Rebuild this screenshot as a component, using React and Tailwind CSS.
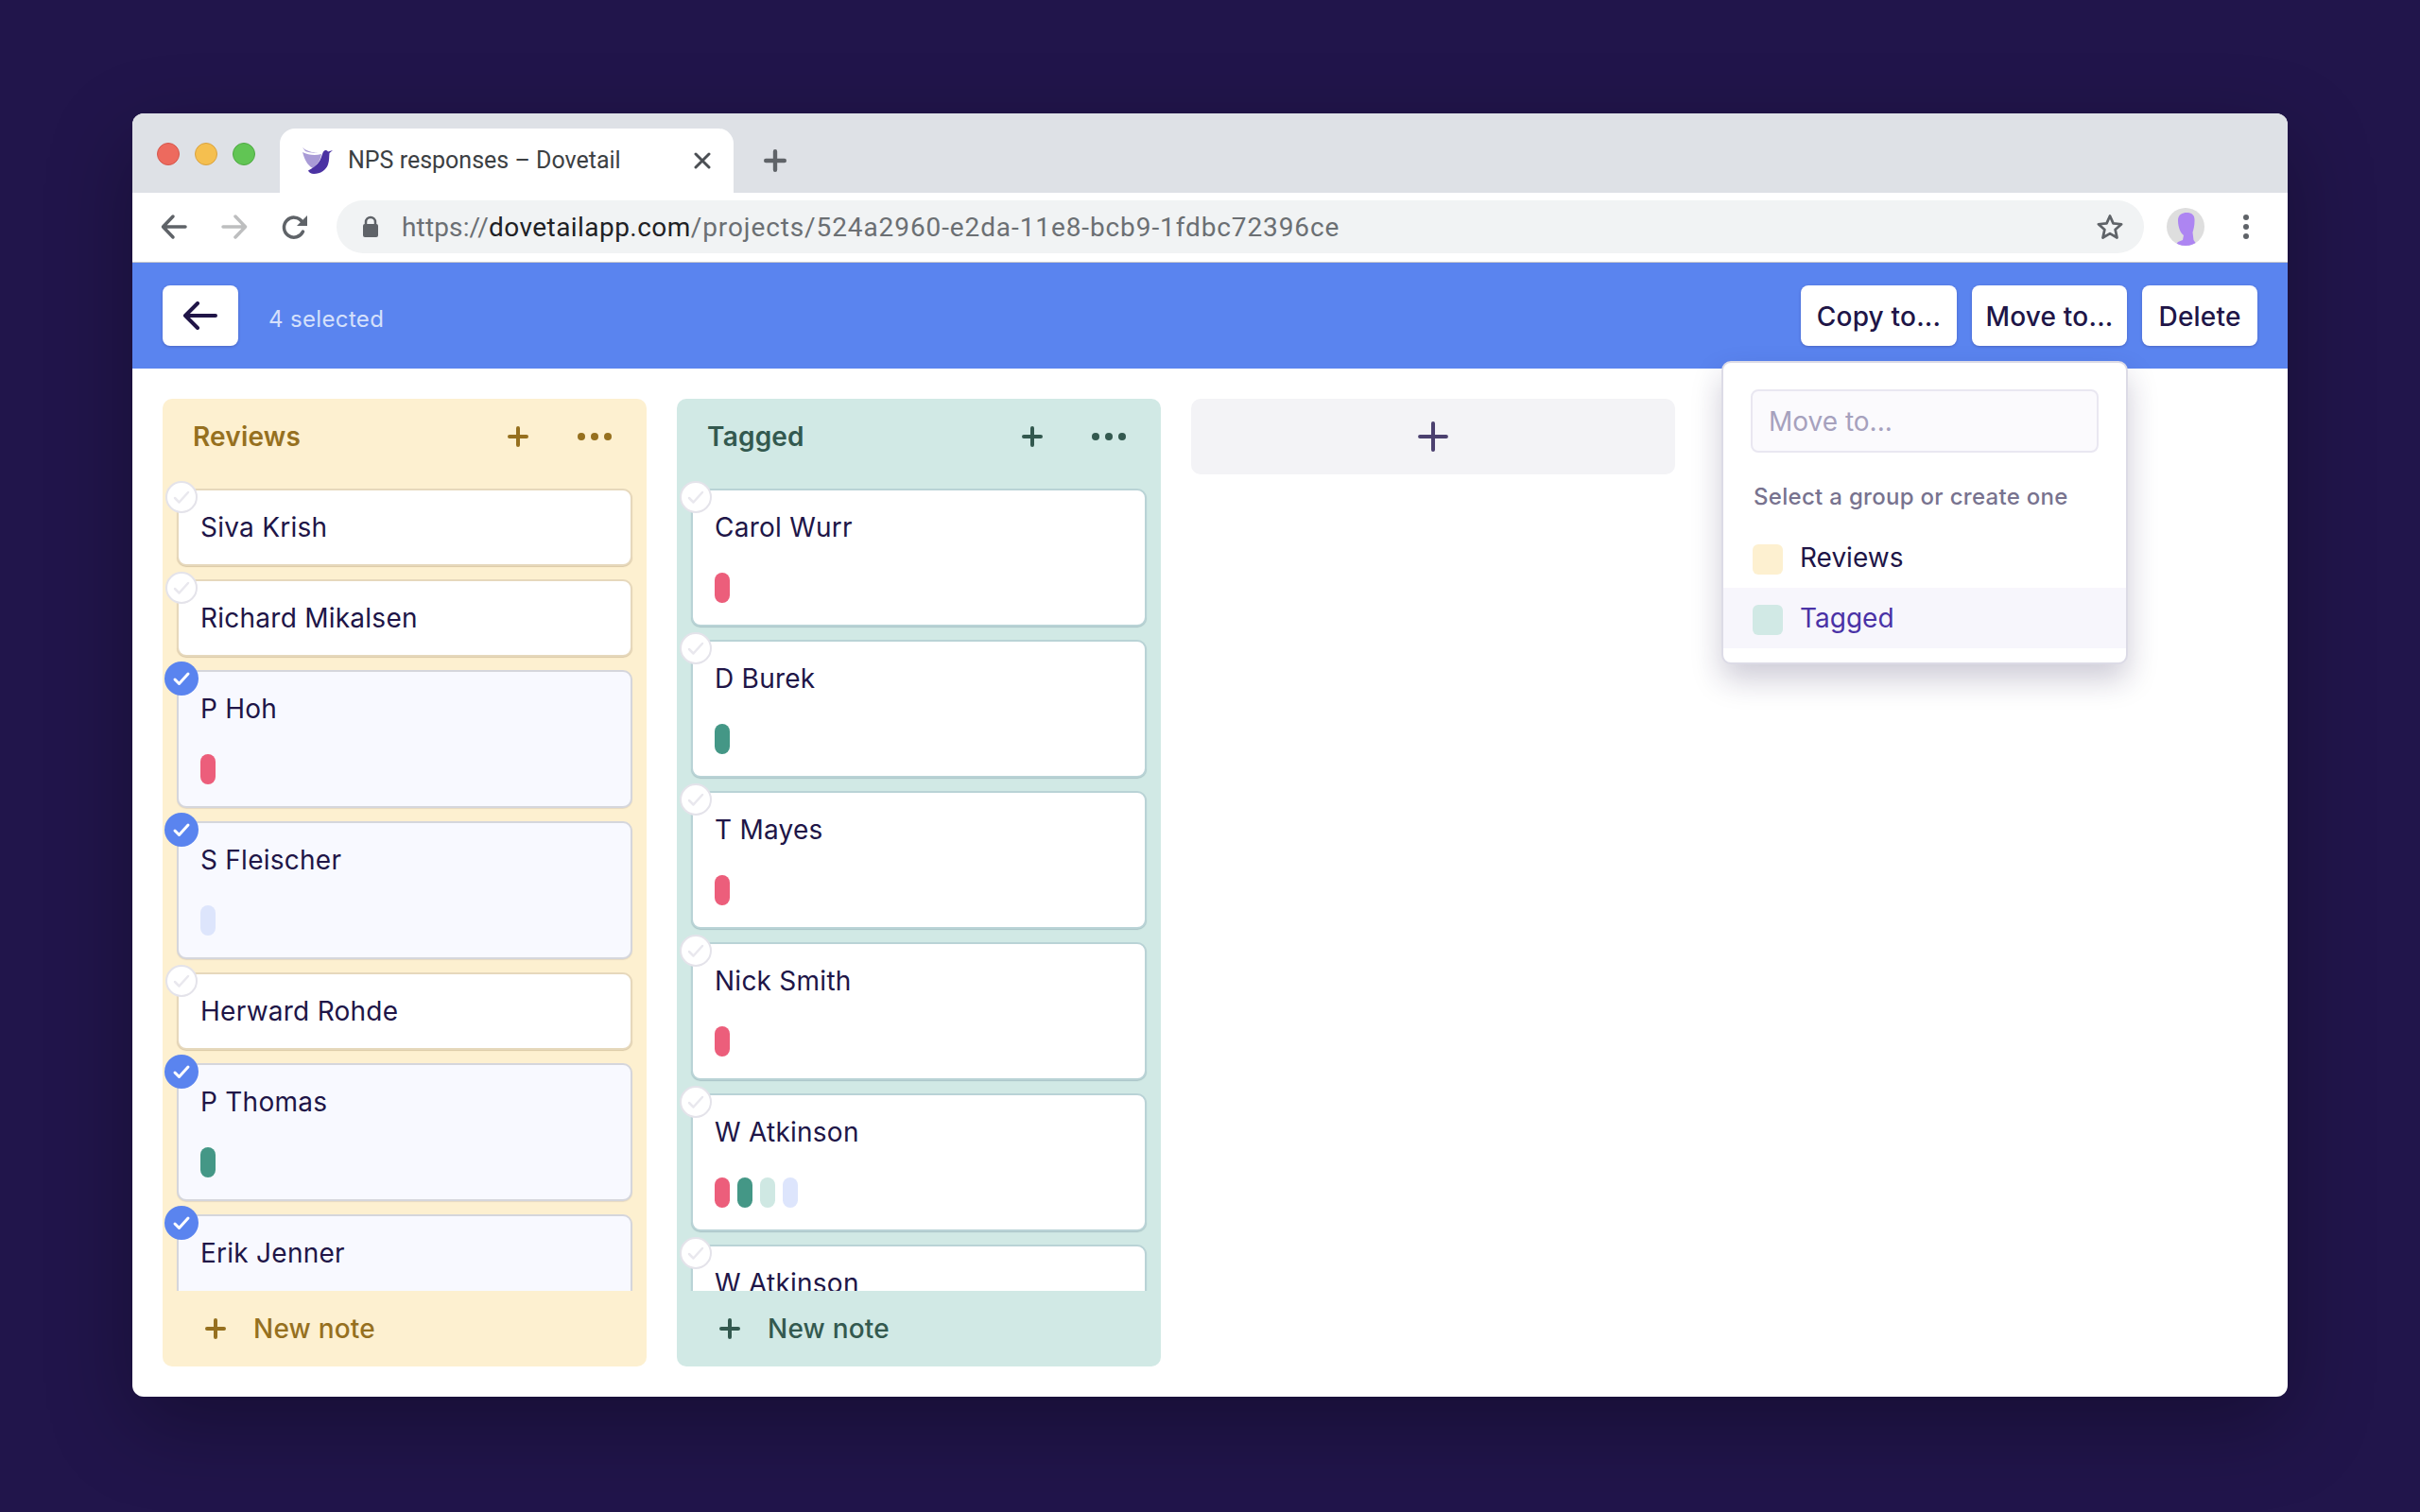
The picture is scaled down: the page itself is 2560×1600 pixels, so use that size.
import React from "react";

const Plus = ({ size = 22, w = 4, color = "currentColor" }) => (
  <svg width={size} height={size} viewBox="0 0 22 22" fill="none" stroke={color} strokeWidth={w} strokeLinecap="round">
    <path d="M11 2v18M2 11h18" />
  </svg>
);

const Dots = () => (
  <svg width="36" height="10" viewBox="0 0 36 10" fill="currentColor">
    <circle cx="4" cy="5" r="4" />
    <circle cx="18" cy="5" r="4" />
    <circle cx="32" cy="5" r="4" />
  </svg>
);

const Check = ({ color, w = 3 }) => (
  <svg width="20" height="16" viewBox="0 0 20 16" fill="none" stroke={color} strokeWidth={w} strokeLinecap="round" strokeLinejoin="round">
    <path d="M3 9l4.5 4.5L17 3" />
  </svg>
);

const Pill = ({ c }) => {
  const cls = {
    red: "w-4 h-8 rounded-full bg-[#ec5e7b]",
    green: "w-4 h-8 rounded-full bg-[#449786]",
    teal: "w-4 h-8 rounded-full bg-[#cfe8e3]",
    blue: "w-4 h-8 rounded-full bg-[#dde5fc]",
  }[c];
  return <span className={cls} />;
};

function Card({ name, pills = [], selected, tint }) {
  const border =
    tint === "yellow"
      ? selected
        ? "border-[#d5d6dc] shadow-[0_1px_1px_rgba(32,21,71,0.1)]"
        : "border-[#e6d8bc] shadow-[0_1px_1px_rgba(90,60,20,0.22)]"
      : "border-[#b9d3d6] shadow-[0_1px_1px_rgba(32,70,90,0.22)]";
  return (
    <div className={`relative shrink-0 w-[482px] rounded-[10px] border-2 pl-[23px] pr-4 pt-[19px] ${selected ? "bg-[#f8f9ff]" : "bg-white"} ${border} ${pills.length ? "h-[146px]" : "h-[82px]"}`}>
      <div className="text-[28px] leading-[40px] text-[#201547] tracking-[0.25px]">{name}</div>
      {pills.length > 0 && (
        <div className="flex gap-2 mt-[28px]">
          {pills.map((p, i) => (
            <Pill key={i} c={p} />
          ))}
        </div>
      )}
      {selected ? (
        <div className="absolute -left-[15px] -top-[11px] w-9 h-9 rounded-full bg-[#5a84ef] flex items-center justify-center">
          <Check color="#ffffff" w={3} />
        </div>
      ) : (
        <div className="absolute -left-[14px] -top-[10px] w-[34px] h-[34px] rounded-full bg-white border-2 border-[#e4e3ea] flex items-center justify-center">
          <Check color="#e9e8ee" w={2.5} />
        </div>
      )}
    </div>
  );
}

function Column({ title, bg, fg, cards, tint }) {
  return (
    <div className={`w-[512px] h-[1024px] rounded-[10px] flex flex-col ${bg}`}>
      <div className={`h-[80px] shrink-0 flex items-center pl-8 pr-[37px] ${fg}`}>
        <div className="flex-1 text-[28px] font-semibold tracking-[0.2px]">{title}</div>
        <div className="mr-[52px]"><Plus /></div>
        <Dots />
      </div>
      <div className="flex-1 overflow-hidden flex flex-col gap-[14px] pl-[15px] pr-[15px] pt-[15px] min-h-0">
        {cards.map((c, i) => (
          <Card key={i} {...c} tint={tint} />
        ))}
      </div>
      <div className={`h-[80px] shrink-0 flex items-center pl-[45px] ${fg}`}>
        <Plus />
        <span className="ml-[29px] text-[28px] font-medium tracking-[0.2px]">New note</span>
      </div>
    </div>
  );
}

const Bird = () => (
  <svg width="34" height="30" viewBox="0 0 34 30">
    <path d="M1 1c4 4 11 6 17 5-3 1-9 1-14-1L1 1z" fill="#a99bd6" />
    <path d="M1 6c6 3 13 4 20 2-1 7-5 12-9 15C6 20 3 13 1 6z" fill="#a99bd6" />
    <path d="M33 4l-5 1.5c-1-1.5-3-2-4.500-.5-1 1-1.500 3-2.500 6-1.500 5-5 10-14 14.500 1 2 3 3.500 6 3.500 7 0 13-4 15-10 1.500-4.500 1-8 1.500-12L33 4z" fill="#4b32a3" />
  </svg>
);

const Avatar = () => (
  <svg width="40" height="40" viewBox="0 0 40 40">
    <defs>
      <clipPath id="av"><circle cx="20" cy="20" r="20" /></clipPath>
    </defs>
    <circle cx="20" cy="20" r="20" fill="#dedede" />
    <path clipPath="url(#av)" d="M12 13c0-6 5-8 9-8 6 0 9 3 8.500 9 0 5-1 8-2 12l1 8 4 6H9l3-4 5-2 1-5c-3-2-6-8-6-16z" fill="#ad85f2" />
  </svg>
);

const reviews = [
  { name: "Siva Krish" },
  { name: "Richard Mikalsen" },
  { name: "P Hoh", pills: ["red"], selected: true },
  { name: "S Fleischer", pills: ["blue"], selected: true },
  { name: "Herward Rohde" },
  { name: "P Thomas", pills: ["green"], selected: true },
  { name: "Erik Jenner", pills: ["red"], selected: true },
];

const tagged = [
  { name: "Carol Wurr", pills: ["red"] },
  { name: "D Burek", pills: ["green"] },
  { name: "T Mayes", pills: ["red"] },
  { name: "Nick Smith", pills: ["red"] },
  { name: "W Atkinson", pills: ["red", "green", "teal", "blue"] },
  { name: "W Atkinson", pills: ["red"] },
];

const ActionBtn = ({ children, w }) => (
  <button className={`h-16 pt-[1px] rounded-lg bg-white text-[28px] font-medium text-[#201547] tracking-[0.2px] shadow-[0_1px_3px_rgba(32,21,71,0.25)] ${w}`}>
    {children}
  </button>
);

export default function App() {
  return (
    <div className="w-[2560px] h-[1600px] bg-[#21154b] pt-[120px] pl-[140px] font-['Inter',sans-serif]">
      <div className="relative w-[2280px] h-[1358px] rounded-[12px] overflow-hidden bg-white shadow-[0_30px_90px_rgba(0,0,0,0.3)] flex flex-col">
        {/* Tab strip */}
        <div className="relative h-[84px] shrink-0 bg-[#dee1e6] flex items-end">
          <div className="flex items-center gap-4 pl-[26px] pb-[29px] w-[156px] shrink-0">
            <span className="w-6 h-6 rounded-full bg-[#ed6a5e] border border-[#d5574c]" />
            <span className="w-6 h-6 rounded-full bg-[#f5bf4f] border border-[#d9a23f]" />
            <span className="w-6 h-6 rounded-full bg-[#61c554] border border-[#4fa843]" />
          </div>
          <div className="w-[480px] h-[68px] rounded-t-[16px] bg-white flex items-center pl-[23px] pr-[24px] shrink-0 font-['Roboto',sans-serif]">
            <Bird />
            <span className="ml-[15px] flex-1 text-[25px] text-[#3c4043]">NPS responses – Dovetail</span>
            <svg width="18" height="18" viewBox="0 0 18 18" stroke="#4b4f54" strokeWidth="3" strokeLinecap="round">
              <path d="M2 2l14 14M16 2L2 16" />
            </svg>
          </div>
          <div className="ml-[32px] mb-[22px] text-[#5f6368]"><Plus size={24} w={4} /></div>
        </div>

        {/* Toolbar */}
        <div className="h-[74px] shrink-0 bg-white border-b border-b-[#c8c9cc] flex items-center pl-[30px] pr-[36px] pb-[2px]">
          <svg width="28" height="28" viewBox="0 0 28 28" fill="none" stroke="#5f6368" strokeWidth="3.500" strokeLinecap="round" strokeLinejoin="round">
            <path d="M26 14H3M13 3L2.500 14 13 25" />
          </svg>
          <svg className="ml-[36px]" width="28" height="28" viewBox="0 0 28 28" fill="none" stroke="#bdbebf" strokeWidth="3.500" strokeLinecap="round" strokeLinejoin="round">
            <path d="M2 14h23M15 3l10.500 11L15 25" />
          </svg>
          <svg className="ml-[36px]" width="28" height="28" viewBox="0 0 28 28" fill="none">
            <path d="M22.500 19a10.500 10.500 0 1 1 -1-10.500" stroke="#5f6368" strokeWidth="3.500" strokeLinecap="round" />
            <path d="M27 2v11H16z" fill="#5f6368" />
          </svg>
          <div className="ml-[30px] w-[1912px] h-14 rounded-full bg-[#f1f3f4] flex items-center pl-[27px] pr-[21px] font-['Roboto',sans-serif]">
            <svg width="18" height="24" viewBox="0 0 18 24" fill="#5f6368">
              <path d="M4 10V7a5 5 0 0 1 10 0v3" fill="none" stroke="#5f6368" strokeWidth="2.500" />
              <rect x="1" y="9" width="16" height="14" rx="2" />
            </svg>
            <span className="ml-[24px] flex-1 pt-[2px] text-[28px] text-[#6b6f73] tracking-[0.15px] whitespace-nowrap">
              https://<span className="text-[#202124] tracking-[0.45px]">dovetailapp.com</span><span className="tracking-[0.9px]">/projects/524a2960-e2da-11e8-bcb9-1fdbc72396ce</span>
            </span>
            <svg width="30" height="30" viewBox="0 0 24 24" fill="none" stroke="#5f6368" strokeWidth="2.200" strokeLinejoin="round">
              <path d="M12 2.800l2.800 6.300 6.900.7-5.200 4.600 1.500 6.800-6-3.500-6 3.500 1.500-6.800-5.200-4.600 6.900-.7z" />
            </svg>
          </div>
          <div className="ml-6"><Avatar /></div>
          <svg className="ml-[40px]" width="8" height="32" viewBox="0 0 8 32" fill="#5f6368">
            <circle cx="4" cy="6" r="3" />
            <circle cx="4" cy="16" r="3" />
            <circle cx="4" cy="26" r="3" />
          </svg>
        </div>

        {/* Blue bar */}
        <div className="h-[112px] shrink-0 bg-[#5a84ef] flex items-center pl-8 pr-8">
          <button className="w-20 h-16 rounded-lg bg-white flex items-center justify-center shadow-[0_1px_3px_rgba(32,21,71,0.25)]">
            <svg width="38" height="30" viewBox="0 0 38 30" fill="none" stroke="#201547" strokeWidth="4" strokeLinecap="round" strokeLinejoin="round">
              <path d="M35 15H3M16 2L3 15l13 13" />
            </svg>
          </button>
          <span className="ml-[32px] flex-1 mt-[7px] text-[24px] text-[#d5e0fb] tracking-[0.35px]">4 selected</span>
          <div className="flex gap-4">
            <ActionBtn w="w-[165px]">Copy to...</ActionBtn>
            <ActionBtn w="w-[164px]">Move to...</ActionBtn>
            <ActionBtn w="w-[122px]">Delete</ActionBtn>
          </div>
        </div>

        {/* Board */}
        <div className="flex-1 min-h-0 flex gap-8 px-8 pt-[32px] items-start">
          <Column title="Reviews" bg="bg-[#fdf0d0]" fg="text-[#96701f]" cards={reviews} tint="yellow" />
          <Column title="Tagged" bg="bg-[#d1e9e5]" fg="text-[#33594f]" cards={tagged} tint="teal" />
          <div className="w-[512px] h-[80px] rounded-[10px] bg-[#f3f3f6] flex items-center justify-center text-[#4b406f]">
            <Plus size={34} w={2.600} />
          </div>
        </div>

        {/* Dropdown */}
        <div className="absolute left-[1681px] top-[262px] w-[430px] h-[321px] rounded-[10px] bg-white border-2 border-[#dcdbe6] shadow-[0_16px_32px_rgba(32,21,71,0.22)]">
          <div className="mx-[29px] mt-[28px] h-[67px] rounded-lg bg-[#fbfafd] border-2 border-[#e9e7f1] flex items-center pl-[17px] text-[28px] text-[#a6a1bd]">
            Move to...
          </div>
          <div className="ml-[32px] mt-[30px] text-[24px] leading-[34px] font-medium text-[#78738f] tracking-[0.3px]">Select a group or create one</div>
          <div className="mt-[15px] h-16 flex items-center pl-[31px] text-[28px] text-[#201547]">
            <span className="w-8 h-8 mt-[3px] rounded-md bg-[#fdf0d0] mr-[18px]" />
            Reviews
          </div>
          <div className="h-16 flex items-center pl-[31px] text-[28px] text-[#4a32a6] bg-[#f7f6fc]">
            <span className="w-8 h-8 mt-[3px] rounded-md bg-[#d1e9e5] mr-[18px]" />
            Tagged
          </div>
        </div>
      </div>
    </div>
  );
}
